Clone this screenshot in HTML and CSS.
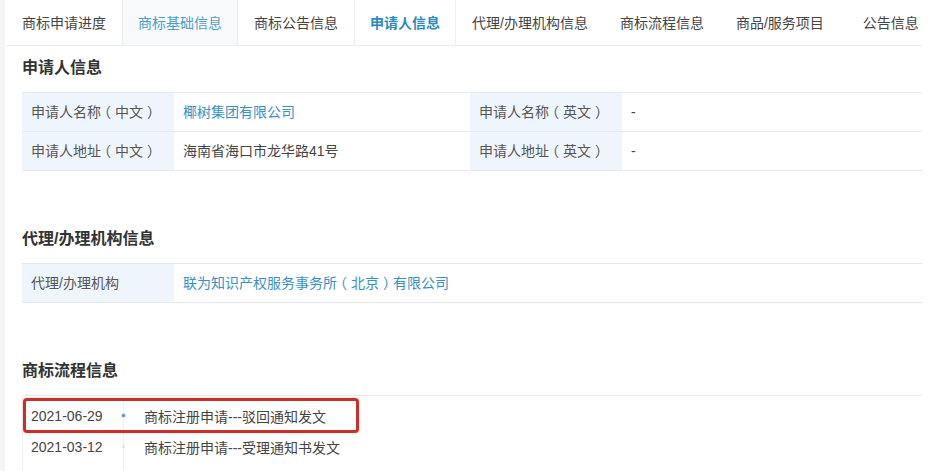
FILE: index.html
```html
<!DOCTYPE html>
<html lang="zh-CN">
<head>
<meta charset="utf-8">
<title>申请人信息</title>
<link rel="stylesheet" href="styles.css">
</head>
<body>
<div class="page">
  <nav class="tabs">
    <a class="tab">商标申请进度</a>
    <a class="tab tab-hover">商标基础信息</a>
    <a class="tab">商标公告信息</a>
    <a class="tab tab-active">申请人信息</a>
    <a class="tab">代理/办理机构信息</a>
    <a class="tab">商标流程信息</a>
    <a class="tab">商品/服务项目</a>
    <a class="tab tab-last">公告信息</a>
  </nav>

  <section class="section section-first">
    <h2 class="title">申请人信息</h2>
    <table class="info">
      <colgroup><col class="c-label"><col class="c-value"><col class="c-label"><col></colgroup>
      <tr>
        <td class="label">申请人名称<span class="po">（</span>中文<span class="pc">）</span></td>
        <td class="value link">椰树集团有限公司</td>
        <td class="label">申请人名称<span class="po">（</span>英文<span class="pc">）</span></td>
        <td class="value">-</td>
      </tr>
      <tr>
        <td class="label">申请人地址<span class="po">（</span>中文<span class="pc">）</span></td>
        <td class="value">海南省海口市龙华路41号</td>
        <td class="label">申请人地址<span class="po">（</span>英文<span class="pc">）</span></td>
        <td class="value">-</td>
      </tr>
    </table>
  </section>

  <section class="section">
    <h2 class="title">代理/办理机构信息</h2>
    <table class="info">
      <colgroup><col class="c-label"><col></colgroup>
      <tr>
        <td class="label">代理/办理机构</td>
        <td class="value link">联为知识产权服务事务所<span class="po">（</span>北京<span class="pc">）</span>有限公司</td>
      </tr>
    </table>
  </section>

  <section class="section">
    <h2 class="title">商标流程信息</h2>
    <div class="flow">
      <div class="flow-row">
        <span class="date">2021-06-29</span>
        <span class="node"><i class="dot dot-on"></i></span>
        <span class="step">商标注册申请---驳回通知发文</span>
      </div>
      <div class="flow-row">
        <span class="date">2021-03-12</span>
        <span class="node"><i class="dot"></i></span>
        <span class="step">商标注册申请---受理通知书发文</span>
      </div>
      <div class="flow-row">
        <span class="date">2021-02-25</span>
        <span class="node"><i class="dot"></i></span>
        <span class="step">商标注册申请---申请收文</span>
      </div>
      <div class="mark"></div>
    </div>
  </section>
</div>
</body>
</html>
```

FILE: styles.css
```css
html, body {
  margin: 0;
  padding: 0;
}
body {
  background: #f4f5f6;
  font-family: "Liberation Sans", "Noto Sans CJK SC", sans-serif;
  font-size: 14px;
  color: #444;
  overflow: hidden;
}
.page {
  margin-left: 5px;
  background: #fff;
  min-height: 471px;
  padding-left: 1px;
}

/* tabs */
.tabs {
  display: flex;
  width: 916px;
  height: 46px;
  border-bottom: 1px solid #eceef0;
  box-sizing: border-box;
  white-space: nowrap;
}
.tab {
  display: flex;
  align-items: center;
  padding: 0 15px;
  color: #444;
  line-height: 20px;
  border-left: 1px solid transparent;
  border-right: 1px solid transparent;
}
.tab-hover {
  background: #f8f9fa;
  color: #4d9fc6;
  border-left-color: #eceef0;
  border-right-color: #eceef0;
}
.tab-active {
  color: #2a8abd;
  font-weight: bold;
  border-left-color: #eceef0;
  border-right-color: #eceef0;
}
.tab-last {
  margin-left: 7px;
}

/* sections */
.section {
  padding-left: 16px;
  width: 900px;
}
.title {
  margin: 56px 0 12px;
  font-size: 16px;
  line-height: 24px;
  font-weight: bold;
  color: #333;
}
.section-first .title {
  margin-top: 10px;
}

.info {
  width: 900px;
  border-collapse: collapse;
  table-layout: fixed;
}
.info col.c-label { width: 152px; }
.info col.c-value { width: 296px; }
.info td {
  height: 39px;
  padding: 0 9px;
  border-top: 1px solid #e6e9ec;
  border-bottom: 1px solid #e6e9ec;
  line-height: 20px;
  box-sizing: border-box;
  white-space: nowrap;
}
.info .label {
  background: #eef5fc;
  color: #555;
}
.info .value {
  color: #444;
}
.info .link {
  color: #3a8fc6;
}
/* full-width parentheses drawn centred in their em box, as in the source font */
.po,
.pc {
  display: inline-block;
  width: 14px;
  box-sizing: border-box;
}
.po {
  text-indent: -4px;
}
.pc {
  padding-left: 4px;
}

/* flow */
.flow {
  position: relative;
  border-top: 1px solid #e9ecee;
  border-left: 1px solid #eef0f2;
  padding-top: 4px;
}
.flow-row {
  display: flex;
  align-items: center;
  height: 31px;
}
.date {
  width: 100px;
  padding-left: 8px;
  box-sizing: border-box;
  color: #444;
}
.node {
  position: relative;
  width: 1px;
  align-self: stretch;
  background: #eef0f2;
  display: flex;
  align-items: center;
  justify-content: center;
}
.dot {
  width: 3px;
  height: 3px;
  border-radius: 50%;
  background: #dde3e8;
  flex: none;
}
.dot-on {
  background: #4f8fd0;
  box-shadow: 0 0 0 1px #cfe0f2;
}
.step {
  padding-left: 20px;
  color: #444;
}
.mark {
  position: absolute;
  left: 0;
  top: 2px;
  width: 336px;
  height: 35px;
  border: 3px solid #c8302b;
  border-radius: 4px;
  box-sizing: border-box;
  box-shadow: 0 0 2px rgba(200, 48, 43, 0.35);
}
```
